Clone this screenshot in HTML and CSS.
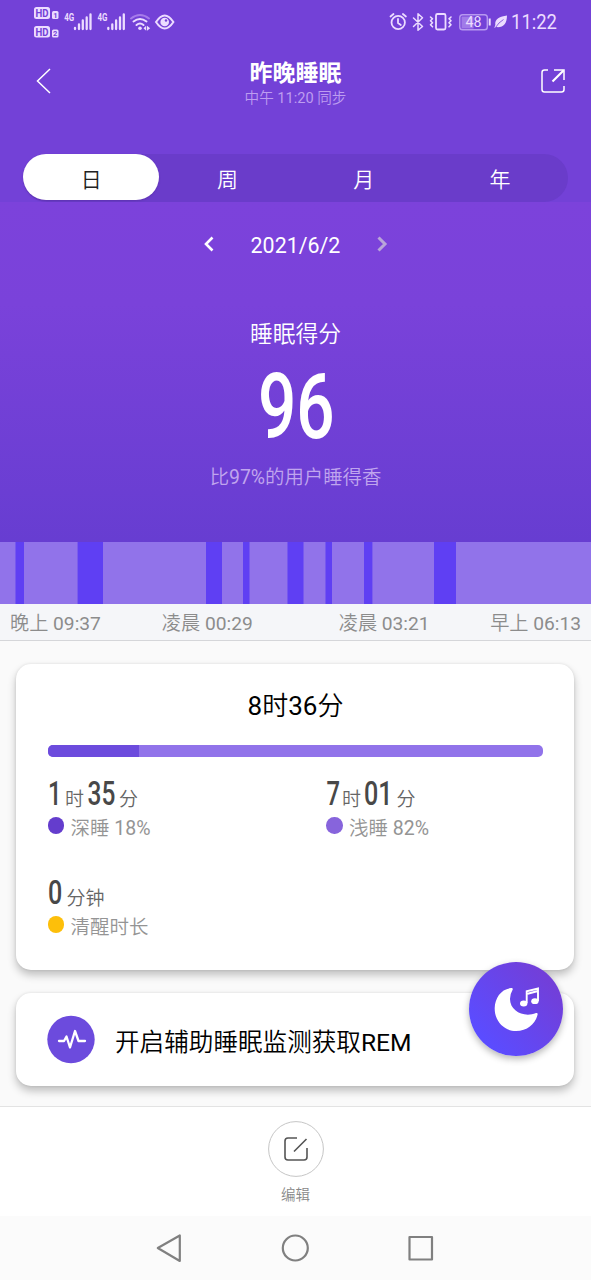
FILE: index.html
```html
<!DOCTYPE html>
<html lang="zh-CN">
<head>
<meta charset="utf-8">
<title>昨晚睡眠</title>
<link rel="stylesheet" href="styles.css">
</head>
<body>
<div class="phone">
  <header class="top">
    <div class="status">
      <svg class="status-left" width="150" height="44" viewBox="30 0 150 44">
        <g fill="#ecdcff">
          <rect x="34" y="7" width="16" height="12" rx="2.5"/><rect x="52" y="11" width="6.500" height="8" rx="1.500"/>
          <rect x="34" y="26" width="16" height="11.500" rx="2.500"/><rect x="52" y="29.500" width="6.500" height="8" rx="1.500"/>
        </g>
        <g class="hd"><text x="35.500" y="16.700" textLength="13" lengthAdjust="spacingAndGlyphs">HD</text><text x="35.500" y="35.500" textLength="13" lengthAdjust="spacingAndGlyphs">HD</text></g>
        <g class="sim"><text x="53.200" y="17.800">1</text><text x="53.100" y="36.300">2</text></g>
        <g class="net"><text x="64.300" y="21" textLength="10" lengthAdjust="spacingAndGlyphs">4G</text><text x="97.500" y="21" textLength="10" lengthAdjust="spacingAndGlyphs">4G</text></g>
        <path d="M75 29v-1M79 29v-4.500M82.800 29v-8.500M86.700 29v-11.500M90.500 29v-14.500M108.300 29v-1M112.300 29v-4.500M116.100 29v-8.500M120 29v-11.500M123.800 29v-14.500" stroke="#ecdcff" stroke-width="2.300" stroke-linecap="round"/>
        <g fill="none" stroke="#ecdcff" stroke-width="2" stroke-linecap="round">
          <path d="M131 18.500q9-7 18 0" stroke="#a67bea"/><path d="M133.500 21.500q6.500-5 13 0M136.500 25q3.500-3 7 0"/>
        </g>
        <circle cx="140" cy="28.300" r="1.800" fill="#ecdcff"/><path d="M143.500 28.300l2.700-2.500v5zM147 25.800v5l3.200-2.500z" fill="#ecdcff"/>
        <path d="M156 22q8.700-13 17.400 0q-8.700 13-17.400 0z" fill="none" stroke="#ecdcff" stroke-width="2"/>
        <circle cx="164.700" cy="22" r="4.300" fill="#ecdcff"/><circle cx="166" cy="20.500" r="1.200" fill="#7341d7"/>
      </svg>
      <svg class="status-right" width="180" height="44" viewBox="385 0 180 44">
        <g fill="none" stroke="#ecdcff" stroke-width="1.800" stroke-linecap="round" stroke-linejoin="round">
          <circle cx="398.200" cy="22.500" r="6.700"/><path d="M398 19v4l2.800 2M390.500 16.500l3-2.500M405.900 16.500l-3-2.500"/>
          <path d="M413.500 18l9 8.500-4.500 3.800V13.700l4.500 4-9 8.800" stroke-width="1.500"/>
          <rect x="436" y="14" width="9.500" height="15.500" rx="1.500"/>
          <path d="M430.500 17l2 1.800-2 2 2 2-2 2 2 2M451 17l-2 1.800 2 2-2 2 2 2-2 2" stroke-width="1.600"/>
        </g>
        <rect x="461.500" y="16.500" width="12" height="12" fill="#a17be8"/>
        <rect x="459.800" y="14.800" width="27.500" height="15" rx="2.800" fill="none" stroke="#b799f0" stroke-width="1.400"/>
        <path d="M489.700 18.500v7" stroke="#ecdcff" stroke-width="2"/>
        <text class="battery" x="465.500" y="27" textLength="16" lengthAdjust="spacingAndGlyphs">48</text>
        <path d="M507 15.500c-7 1-12.500 3-11.700 9.500l-1 3 2-.9c7 .7 10.500-3 10.700-11.600z" fill="#ecdcff"/><path d="M495.500 27.500q3-5 8-8" stroke="#7341d7" stroke-width=".8" fill="none"/>
        <text class="clock" x="511" y="29" textLength="46" lengthAdjust="spacingAndGlyphs">11:22</text>
      </svg>
    </div>
    <div class="titlebar">
      <svg class="back" width="20" height="28" viewBox="0 0 20 28"><path d="M16 2L3.500 14 16 26" fill="none" stroke="#fff" stroke-width="1.500"/></svg>
      <div class="titles"><h1>昨晚睡眠</h1><p>中午 <span class="latin">11:20</span> 同步</p></div>
      <svg class="share" width="26" height="26" viewBox="0 0 26 26"><path d="M8 2H4.500Q2 2 2 4.500v17Q2 24 4.500 24h17q2.500 0 2.500-2.500V18M14 2h10v10" fill="none" stroke="#fff" stroke-width="1.500"/><path d="M12.500 13.500L23.500 2.500" stroke="#fff" stroke-width="2.200"/></svg>
    </div>
    <nav class="tabs"><span class="tab active">日</span><span class="tab">周</span><span class="tab">月</span><span class="tab">年</span></nav>
  </header>

  <section class="hero">
    <div class="date">
      <svg width="12" height="18" viewBox="0 0 12 18"><path d="M9.500 2.500L3 9l6.500 6.500" fill="none" stroke="#fff" stroke-width="2.600"/></svg>
      <span>2021/6/2</span>
      <svg width="12" height="18" viewBox="0 0 12 18"><path d="M2.500 2.500L9 9l-6.500 6.500" fill="none" stroke="#b9a5d9" stroke-width="3"/></svg>
    </div>
    <div class="score-label">睡眠得分</div>
    <svg class="score" width="90" height="80" viewBox="0 0 90 80"><text class="num" font-size="90" transform="translate(7 71.500) scale(.75 1)">96</text></svg>
    <div class="score-note">比<span class="latin">97%</span>的用户睡得香</div>
  </section>

  <svg class="chart" width="591" height="62" viewBox="0 0 591 62"><path fill="#5f3ff3" d="M15.500 0H24v62h-8.500zM77.600 0H103v62H77.600zM206 0h16v62h-16zM243 0h6.500v62H243zM287.500 0h16v62h-16zM325.500 0h6.500v62h-6.500zM364 0h8.400v62H364zM434 0h22v62h-22z"/></svg>
  <div class="times"><div>晚上 <span class="latin">09:37</span></div><div>凌晨 <span class="latin">00:29</span></div><div>凌晨 <span class="latin">03:21</span></div><div>早上 <span class="latin">06:13</span></div></div>

  <main class="content">
    <section class="card summary">
      <div class="total"><span class="latin">8</span>时<span class="latin">36</span>分</div>
      <div class="bar"><div class="bar-deep"></div></div>
      <div class="stats">
        <div class="stat">
          <svg width="120" height="34" viewBox="0 0 120 34"><text class="num" font-size="34" transform="translate(0 28) scale(.7 1)">1</text><text class="unit" x="17" y="28.500">时</text><text class="num" font-size="34" transform="translate(39.500 28) scale(.72 1)">35</text><text class="unit" x="71" y="28.500">分</text></svg>
          <div class="legend"><i class="dot deep"></i><div>深睡 <span class="latin">18%</span></div></div>
        </div>
        <div class="stat">
          <svg width="120" height="34" viewBox="0 0 120 34"><text class="num" font-size="34" transform="translate(-.5 28) scale(.7 1)">7</text><text class="unit" x="15" y="28.500">时</text><text class="num" font-size="34" transform="translate(37 28) scale(.74 1)">01</text><text class="unit" x="69.500" y="28.500">分</text></svg>
          <div class="legend"><i class="dot light"></i><div>浅睡 <span class="latin">82%</span></div></div>
        </div>
        <div class="stat">
          <svg width="120" height="34" viewBox="0 0 120 34"><text class="num" font-size="34" transform="translate(0 28) scale(.74 1)">0</text><text class="unit" x="18.500" y="28.500">分钟</text></svg>
          <div class="legend"><i class="dot awake"></i><div>清醒时长</div></div>
        </div>
      </div>
    </section>
    <section class="card rem">
      <svg width="48" height="48" viewBox="0 0 48 48"><circle cx="24" cy="23.500" r="23.700" fill="#6c4bdd"/><path d="M12 25h5l2.500-4.500 3.500 11 5-16.500 3.500 10H38" fill="none" stroke="#fff" stroke-width="2.300" stroke-linecap="round" stroke-linejoin="round"/></svg>
      <div>开启辅助睡眠监测获取<span class="latin">REM</span></div>
    </section>
    <svg class="fab" width="94" height="94" viewBox="0 0 94 94">
      <defs><linearGradient id="fab-fill" x1=".15" y1=".8" x2=".85" y2=".2"><stop offset="0" stop-color="#5b4cff"/><stop offset="1" stop-color="#723fd9"/></linearGradient></defs>
      <circle cx="47" cy="47" r="47" fill="url(#fab-fill)"/>
      <path d="M42 26C32 27 26 36 25.700 46C25.400 59 35 69 47 69C59 69 67 61 68.700 52Q68.500 50.500 67 51C55 56 41 49 41 37Q41 32 43.500 28Q44.500 25.700 42 26z" fill="#fff"/>
      <path d="M57.700 41V29.300L69 26.500V39M57.700 32L69 29" fill="none" stroke="#fff" stroke-width="1.900"/><ellipse cx="54.700" cy="41.500" rx="3.700" ry="2.900" fill="#fff"/><ellipse cx="65.900" cy="39.200" rx="3.700" ry="2.900" fill="#fff"/>
    </svg>
  </main>

  <footer class="edit">
    <svg width="56" height="56" viewBox="0 0 56 56"><circle cx="28" cy="28" r="27.400" fill="#fff" stroke="#c6c6c6"/><path d="M29 17H20q-3 0-3 3v16q0 3 3 3h16q3 0 3-3V27M26 30.500L38.500 18" fill="none" stroke="#555" stroke-width="1.600"/></svg>
    <span>编辑</span>
  </footer>
  <div class="sysnav">
    <svg width="591" height="64" viewBox="0 0 591 64"><g fill="none" stroke="#808080" stroke-width="2.200" stroke-linejoin="round"><path d="M157.800 32L179.800 19.500V45z"/><circle cx="295.300" cy="32" r="12.500"/><rect x="409.500" y="21" width="22.500" height="22.500"/></g></svg>
  </div>
</div>
</body>
</html>
```

FILE: styles.css
```css
* { box-sizing: border-box; }
body { margin: 0; font-family: Roboto, "Noto Sans CJK SC", sans-serif; font-weight: 350; background: #fafafa; }
svg { display: block; flex: none; overflow: visible; }
.latin { font-weight: 400; }
.phone { width: 591px; height: 1280px; display: flex; flex-direction: column; overflow: hidden; }
.top { height: 202px; background: #7341d7; color: #fff; flex: none; }
.status { height: 44px; display: flex; justify-content: space-between; padding: 0 26px 0 30px; }
.hd { font: 700 10.500px Roboto, sans-serif; fill: #7341d7; }
.sim { font: 700 7.500px Roboto, sans-serif; fill: #7341d7; }
.net { font: 700 10.500px Roboto, sans-serif; fill: #ecdcff; }
.battery { font: 14px Roboto, sans-serif; fill: #ecdcff; }
.clock { font: 19.500px Roboto, sans-serif; fill: #ecdcff; }
.titlebar { height: 110px; display: flex; justify-content: space-between; align-items: flex-start; padding: 0 25px 0 34px; }
.back { margin-top: 23px; }
.share { margin-top: 24px; }
.titles { text-align: center; padding: 15px 3px 0 0; }
h1 { margin: 0; font-size: 23px; line-height: 30px; font-weight: 700; }
.titles p { margin: -1px 0 0; font-size: 14.600px; line-height: 20px; color: #bd9df0; }
.tabs { height: 48px; margin: 0 23px; display: flex; border-radius: 24px; background: #6a3cca; }
.tab { flex: 1; text-align: center; font-size: 21px; line-height: 52px; }
.tab.active { height: 46px; border-radius: 23px; background: #fff; color: #222; box-shadow: 0 1px 2px #4b278c66; }
.hero { height: 340px; flex: none; background: linear-gradient(#7c42db 0%, #7a42da 30%, #673dd1 100%); color: #fff; display: flex; flex-direction: column; align-items: center; }
.date { height: 84px; width: 185px; display: flex; align-items: center; justify-content: space-between; font-size: 21.400px; font-weight: 400; }
.date span { padding-top: 2px; }
.score-label { margin-top: 33px; height: 32px; line-height: 32px; font-size: 22.800px; }
.score { margin-top: 15px; fill: #fff; }
.num { font-family: Roboto, sans-serif; font-weight: 500; }
.score-note { margin-top: 18px; line-height: 28px; font-size: 19.400px; color: #c0a5ee; }
.chart { background: #9173ea; }
.times { height: 37px; flex: none; display: flex; padding: 2px 10px 0; background: #f5f6f9; border-bottom: 1px solid #d5d6d9; color: #8c8c8c; font-size: 19.200px; line-height: 35px; }
.times div:nth-child(2) { margin-left: 61px; }
.times div:nth-child(3) { margin-left: 86px; }
.times div:nth-child(4) { margin-left: auto; }
.content { height: 465px; flex: none; position: relative; padding: 23px 17px 0 16px; background: #fafafa; overflow: hidden; }
.card { background: #fff; border-radius: 15px; box-shadow: 0 5px 9px #0000003d, 0 0 3px #00000018; }
.summary { height: 306px; padding: 22px 31px 0 32px; }
.total { text-align: center; font-size: 26px; line-height: 40px; color: #000; }
.bar { margin-top: 19px; height: 12px; border-radius: 5px; background: #9173ea; overflow: hidden; }
.bar-deep { width: 18.3%; height: 100%; background: #6c4bdd; }
.stats { display: grid; grid-template-columns: 278.500px 1fr; grid-auto-rows: 99px; padding-top: 20px; }
.stat { fill: #484848; }
.unit { font-family: "Noto Sans CJK SC", sans-serif; font-size: 19px; font-weight: 350; fill: #666; }
.legend { display: flex; align-items: center; gap: 6.500px; height: 31px; font-size: 19.500px; color: #949494; }
.dot { flex: none; width: 16.500px; height: 16.500px; border-radius: 50%; margin: -2px 0 0 -.5px; }
.deep { background: #643dcd; }
.light { background: #8764dc; }
.awake { background: #fdbf0a; }
.rem { height: 93px; margin-top: 23px; padding: 0 31px; display: flex; align-items: center; gap: 20px; font-size: 24.600px; color: #000; }
.fab { position: absolute; left: 469px; top: 321px; border-radius: 50%; box-shadow: 0 3px 7px #0000004a; }
.edit { height: 110px; flex: none; background: #fff; border-top: 1px solid #e3e3e3; padding-top: 14px; display: flex; flex-direction: column; align-items: center; }
.edit span { margin-top: 8px; font-size: 14.500px; line-height: 22px; color: #888; }
.sysnav { height: 64px; flex: none; background: #fbfbfb; }
```
